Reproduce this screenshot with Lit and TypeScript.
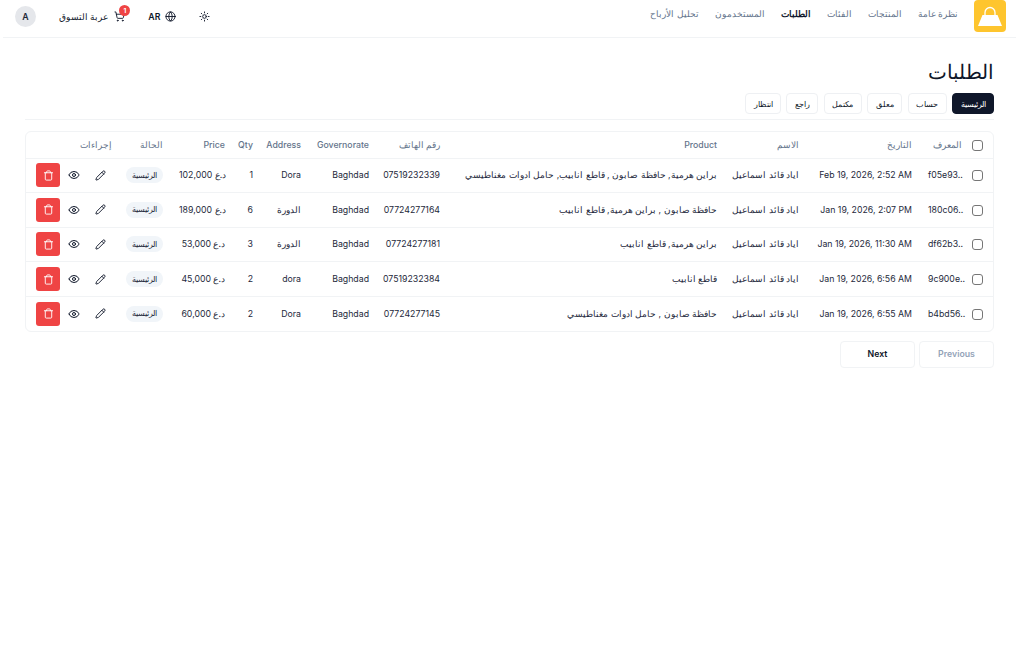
import { html, css, LitElement } from 'lit'
import { customElement } from 'lit/decorators.js'

const orders = [
  { id: 'f05e93..', date: 'Feb 19, 2026, 2:52 AM', name: 'اياد قائد اسماعيل', product: 'براين هرمية, حافظة صابون , قاطع انابيب, حامل ادوات مغناطيسي', phone: '07519232339', gov: 'Baghdad', addr: 'Dora', qty: 1, price: '102,000' },
  { id: '180c06..', date: 'Jan 19, 2026, 2:07 PM', name: 'اياد قائد اسماعيل', product: 'حافظة صابون , براين هرمية, قاطع انابيب', phone: '07724277164', gov: 'Baghdad', addr: 'الدورة', qty: 6, price: '189,000' },
  { id: 'df62b3..', date: 'Jan 19, 2026, 11:30 AM', name: 'اياد قائد اسماعيل', product: 'براين هرمية, قاطع انابيب', phone: '07724277181', gov: 'Baghdad', addr: 'الدورة', qty: 3, price: '53,000' },
  { id: '9c900e..', date: 'Jan 19, 2026, 6:56 AM', name: 'اياد قائد اسماعيل', product: 'قاطع انابيب', phone: '07519232384', gov: 'Baghdad', addr: 'dora', qty: 2, price: '45,000' },
  { id: 'b4bd56..', date: 'Jan 19, 2026, 6:55 AM', name: 'اياد قائد اسماعيل', product: 'حافظة صابون , حامل ادوات مغناطيسي', phone: '07724277145', gov: 'Baghdad', addr: 'Dora', qty: 2, price: '60,000' }
]

const navLinks = ['نظرة عامة', 'المنتجات', 'الفئات', 'الطلبات', 'المستخدمون', 'تحليل الأرباح']
const filters = ['الرئيسية', 'حساب', 'معلق', 'مكتمل', 'راجع', 'انتظار']

@customElement('app-root')
export class AppRoot extends LitElement {
  static styles = css`
    :host {
      display: block;
      width: 1016px;
      height: 656px;
      background: #fff;
      color: #0f172a;
      font-family: Inter, "Noto Sans", sans-serif;
      font-size: 8.75px;
    }
    svg { display: block; }

    header {
      display: flex;
      align-items: flex-start;
      justify-content: space-between;
      height: 37px;
      margin-left: 3px;
      padding: 0 10px 0 12px;
      border-bottom: 1px solid #f1f3f5;
    }
    .start { display: flex; align-items: center; gap: 23px; margin-top: 6px; height: 21px; }
    .end { display: flex; align-items: flex-start; gap: 16px; }
    .logo {
      width: 32px;
      height: 32px;
      border-radius: 4px;
      background: #fec52e;
    }
    nav { display: flex; gap: 16px; margin-top: 9px; color: #64748b; }
    nav .active { color: #0f172a; font-weight: 700; }
    .avatar {
      width: 21px;
      height: 21px;
      border-radius: 50%;
      background: #e5e7eb;
      display: flex;
      align-items: center;
      justify-content: center;
      font-weight: 600;
      color: #1f2937;
    }
    .cart { display: flex; align-items: center; gap: 6px; font-weight: 500; }
    .cart-icon { position: relative; }
    .count {
      position: absolute;
      top: -6px;
      right: -5px;
      width: 11px;
      height: 11px;
      border-radius: 50%;
      background: #ef4444;
      color: #fff;
      font-size: 6.5px;
      font-weight: 700;
      display: flex;
      align-items: center;
      justify-content: center;
    }
    .lang { display: flex; align-items: center; gap: 5px; font-weight: 600; }

    main { padding: 0 22px 0 25px; }
    h1 { margin: 0; padding-top: 20px; font-size: 20px; line-height: 28px; font-weight: 500; color: #0f172a; }
    .filters {
      display: flex;
      gap: 5.4px;
      margin-top: 7px;
      padding-bottom: 5px;
      border-bottom: 1px solid #f1f3f5;
    }
    .filters button {
      height: 21px;
      padding: 0 7.5px;
      border: 1px solid #eef0f3;
      border-radius: 4px;
      background: #fff;
      color: #0f172a;
      font: 500 8.2px Inter, "Noto Sans", sans-serif;
    }
    .filters button.on { background: #0f172a; border-color: #0f172a; color: #fff; }

    .card { margin-top: 11px; border: 1px solid #f1f3f5; border-radius: 6px; overflow: hidden; }
    table { width: 100%; border-collapse: collapse; table-layout: fixed; }
    th, td { box-sizing: border-box; padding: 0 8px; white-space: nowrap; text-align: right; overflow: hidden; }
    th { height: 26px; font-weight: 500; color: #64748b; }
    td { height: 34.6px; color: #1e293b; border-top: 1px solid #f1f3f5; }
    th:nth-child(1) { width: 23px; }
    th:nth-child(2) { width: 50px; }
    th:nth-child(3) { width: 113px; }
    th:nth-child(4) { width: 82px; }
    th:nth-child(5) { width: 277px; }
    th:nth-child(6) { width: 71px; }
    th:nth-child(7) { width: 68px; }
    th:nth-child(8) { width: 48px; }
    th:nth-child(9) { width: 28px; }
    th:nth-child(10) { width: 62px; }
    th:nth-child(11) { width: 51px; }
    .check {
      box-sizing: border-box;
      width: 11px;
      height: 11px;
      margin: 1px 2px 0 0;
      border: 1px solid #767676;
      border-radius: 3px;
    }
    .ltr { direction: ltr; }
    .pill {
      display: inline-block;
      padding: 2.5px 6px;
      border-radius: 8px;
      background: #f1f5f9;
      font-size: 8.2px;
      line-height: 11px;
      font-weight: 500;
    }
    .acts { display: flex; align-items: center; gap: 2px; color: #0f172a; }
    .act { width: 24px; height: 24px; display: flex; align-items: center; justify-content: center; flex: none; }
    .del { border-radius: 3px; background: #ef4444; color: #fff; }

    .pager { display: flex; gap: 4px; margin-top: 9px; }
    .pager button {
      width: 75px;
      height: 27px;
      border: 1px solid #f1f3f5;
      border-radius: 4px;
      background: #fff;
      color: #0f172a;
      font: 600 8.75px Inter, "Noto Sans", sans-serif;
    }
    .pager button:disabled { color: #94a3b8; }
  `

  private icons () {
    return {
      pencil: html`<svg width="11" height="11" viewBox="0 0 24 24" fill="none" stroke="currentColor" stroke-width="2" stroke-linecap="round" stroke-linejoin="round"><path d="M21.17 6.81a2.82 2.82 0 0 0-4-4L3.84 16.17a2 2 0 0 0-.5.83L2 21.34a.5.5 0 0 0 .62.62l4.35-1.32a2 2 0 0 0 .83-.5z"/><path d="m15 5 4 4"/></svg>`,
      eye: html`<svg width="12" height="12" viewBox="0 0 24 24" fill="none" stroke="currentColor" stroke-width="2" stroke-linecap="round" stroke-linejoin="round"><path d="M2.06 12.35a1 1 0 0 1 0-.7 10.75 10.75 0 0 1 19.88 0 1 1 0 0 1 0 .7 10.75 10.75 0 0 1-19.88 0"/><circle cx="12" cy="12" r="3"/></svg>`,
      trash: html`<svg width="11" height="11" viewBox="0 0 24 24" fill="none" stroke="currentColor" stroke-width="2" stroke-linecap="round" stroke-linejoin="round"><path d="M3 6h18"/><path d="M19 6v14a2 2 0 0 1-2 2H7a2 2 0 0 1-2-2V6"/><path d="M8 6V4a2 2 0 0 1 2-2h4a2 2 0 0 1 2 2v2"/></svg>`
    }
  }

  render () {
    const { pencil, eye, trash } = this.icons()
    return html`
      <header dir="ltr">
        <div class="start">
          <div class="avatar">A</div>
          <div class="cart">
            <span dir="rtl">عربة التسوق</span>
            <span class="cart-icon">
              <svg width="11" height="11" viewBox="0 0 24 24" fill="none" stroke="currentColor" stroke-width="2" stroke-linecap="round" stroke-linejoin="round"><circle cx="8" cy="21" r="1"/><circle cx="19" cy="21" r="1"/><path d="M2.05 2.05h2l2.66 12.42a2 2 0 0 0 2 1.58h9.78a2 2 0 0 0 1.95-1.57l1.65-7.43H5.12"/></svg>
              <span class="count">1</span>
            </span>
          </div>
          <div class="lang">
            <span>AR</span>
            <svg width="11" height="11" viewBox="0 0 24 24" fill="none" stroke="currentColor" stroke-width="2" stroke-linecap="round" stroke-linejoin="round"><circle cx="12" cy="12" r="10"/><path d="M12 2a14.5 14.5 0 0 0 0 20 14.5 14.5 0 0 0 0-20"/><path d="M2 12h20"/></svg>
          </div>
          <svg width="11" height="11" viewBox="0 0 24 24" fill="none" stroke="currentColor" stroke-width="2" stroke-linecap="round" stroke-linejoin="round"><circle cx="12" cy="12" r="4"/><path d="M12 2v2M12 20v2M4.93 4.93l1.41 1.41M17.66 17.66l1.41 1.41M2 12h2M20 12h2M6.34 17.66l-1.41 1.41M19.07 4.93l-1.41 1.41"/></svg>
        </div>
        <div class="end" dir="rtl">
          <div class="logo">
            <svg width="32" height="32" viewBox="0 0 32 32"><path d="M8.5 15h15L28 26H4z" fill="#fff"/><path d="M11 16v-3.5a5 5 0 0 1 10 0V16" fill="none" stroke="#fff" stroke-width="1.3"/></svg>
          </div>
          <nav>
            ${navLinks.map(l => html`<span class=${l === 'الطلبات' ? 'active' : ''}>${l}</span>`)}
          </nav>
        </div>
      </header>
      <main dir="rtl">
        <h1>الطلبات</h1>
        <div class="filters">
          ${filters.map((f, i) => html`<button class=${i === 0 ? 'on' : ''}>${f}</button>`)}
        </div>
        <div class="card">
          <table>
            <thead>
              <tr>
                <th><div class="check"></div></th>
                <th>المعرف</th><th>التاريخ</th><th>الاسم</th><th>Product</th>
                <th>رقم الهاتف</th><th>Governorate</th><th>Address</th><th>Qty</th><th>Price</th>
                <th>الحالة</th><th>إجراءات</th>
              </tr>
            </thead>
            <tbody>
              ${orders.map(o => html`
                <tr>
                  <td><div class="check"></div></td>
                  <td class="ltr">${o.id}</td>
                  <td>${o.date}</td>
                  <td>${o.name}</td>
                  <td>${o.product}</td>
                  <td>${o.phone}</td>
                  <td>${o.gov}</td>
                  <td>${o.addr}</td>
                  <td>${o.qty}</td>
                  <td class="ltr">د.ع ${o.price}</td>
                  <td><span class="pill">الرئيسية</span></td>
                  <td><div class="acts"><div class="act">${pencil}</div><div class="act">${eye}</div><div class="act del">${trash}</div></div></td>
                </tr>`)}
            </tbody>
          </table>
        </div>
        <div class="pager">
          <button disabled>Previous</button>
          <button>Next</button>
        </div>
      </main>
    `
  }
}
